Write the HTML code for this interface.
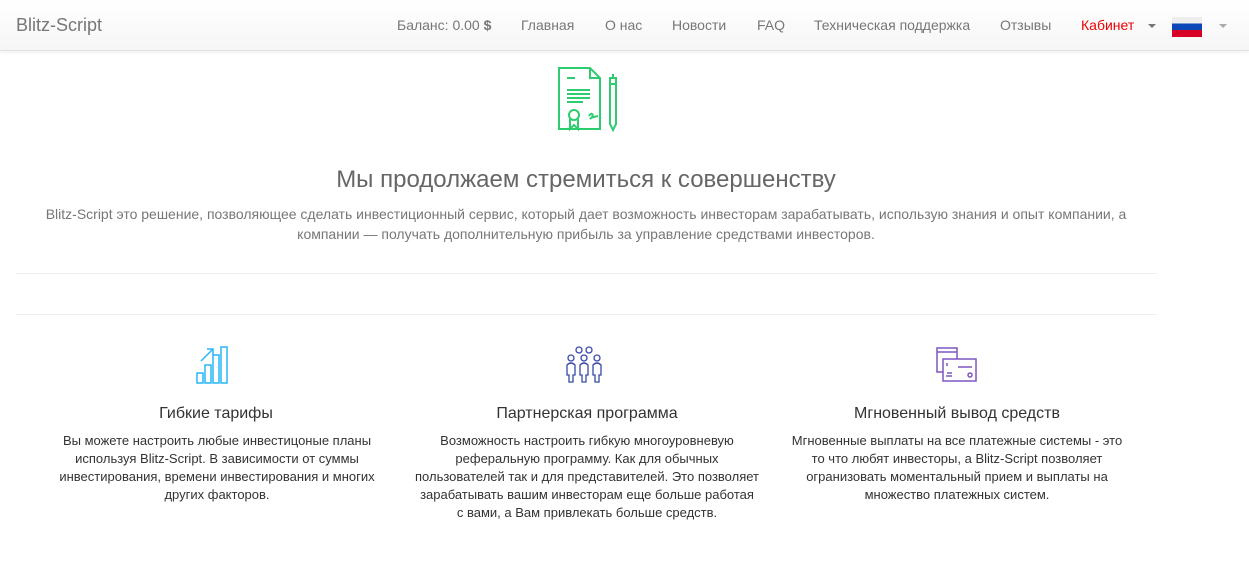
<!DOCTYPE html>
<html><head><meta charset="utf-8"><style>
*{box-sizing:border-box;margin:0;padding:0}
body{width:1249px;height:571px;overflow:hidden;background:#fff;font-family:"Liberation Sans",sans-serif;color:#333;position:relative}
.nav{position:absolute;left:0;top:0;width:1249px;height:51px;background:linear-gradient(#fff,#f6f6f6);border-bottom:1px solid #e2e2e2;box-shadow:0 1px 4px rgba(0,0,0,.08)}
.brand{position:absolute;left:16px;top:15px;font-size:18px;color:#777}
.nav span{position:absolute;top:17px;font-size:14px;color:#777}
.t{position:absolute;left:0;width:1172px;text-align:center}
.ft{position:absolute;text-align:center;font-size:13px;line-height:18px;color:#333}
.fh{position:absolute;text-align:center;font-size:16px;color:#333}
hr{position:absolute;left:16px;width:1141px;border:0;border-top:1px solid #eee}
</style></head><body>
<div class="nav">
<div class="brand">Blitz-Script</div>
<span style="left:397px">Баланс: 0.00 <b>$</b></span>
<span style="left:521px">Главная</span>
<span style="left:605px">О нас</span>
<span style="left:672px">Новости</span>
<span style="left:757px">FAQ</span>
<span style="left:814px">Техническая поддержка</span>
<span style="left:1000px">Отзывы</span>
<span style="left:1081px;color:#e00">Кабинет</span>
<div style="position:absolute;left:1148px;top:24px;border:4px solid transparent;border-top:4px solid #777"></div>
<div style="position:absolute;left:1172px;top:17px;width:30px;height:20px;background:linear-gradient(#eee 0 33%,#0c47b7 33% 66%,#d80027 66%)"></div>
<div style="position:absolute;left:1219px;top:24px;border:4px solid transparent;border-top:4px solid #aaa"></div>
</div>
<svg style="position:absolute;left:556px;top:66px" width="66" height="66" viewBox="0 0 66 66" fill="none" stroke="#2ecc71" stroke-width="2">
<path d="M3 2h31l10 10v51H3z M34 2v10h10"/>
<path d="M11 12h8M11 24h23M11 28h23M11 32h23M11 36h16"/>
<circle cx="18" cy="49" r="5"/><path d="M14 53v10l4-4 4 4v-10"/>
<path d="M33 50c2-4 5-2 3 1s-4 1 6-1"/>
<path d="M54 12v46l3 6 3-6V12z M54 18h6M57 8v4"/>
</svg>
<div class="t" style="top:166px;font-size:24px;color:#666">Мы продолжаем стремиться к совершенству</div>
<div class="t" style="top:204px;font-size:14px;line-height:20px;color:#777">Blitz-Script это решение, позволяющее сделать инвестиционный сервис, который дает возможность инвесторам зарабатывать, использую знания и опыт компании, а<br>компании — получать дополнительную прибыль за управление средствами инвесторов.</div>
<hr style="top:273px"><hr style="top:314px">
<svg style="position:absolute;left:195px;top:345px" width="44" height="40" fill="none" stroke="#29b6f6" stroke-width="1.5">
<path d="M2 28h6v10H2zM10 20h6v18h-6zM18 10h6v28h-6zM26 2h6v36h-6z M6 16l12-12M12 4h6v6"/>
</svg>
<svg style="position:absolute;left:565px;top:345px" width="44" height="40" fill="none" stroke="#3949ab" stroke-width="1.3">
<circle cx="14" cy="5" r="3"/><circle cx="24" cy="5" r="3"/>
<circle cx="6" cy="13" r="3"/><circle cx="19" cy="13" r="3"/><circle cx="32" cy="13" r="3"/>
<path d="M2 30v-10q4-4 8 0v10h-2v7h-4v-7zM15 30v-10q4-4 8 0v10h-2v7h-4v-7zM28 30v-10q4-4 8 0v10h-2v7h-4v-7z"/>
</svg>
<svg style="position:absolute;left:936px;top:346px" width="44" height="40" fill="none" stroke="#7e57c2" stroke-width="1.5">
<path d="M1 2h20v24H1z M1 6h20"/><rect x="7" y="13" width="33" height="22" fill="#fff"/>
<path d="M11 17v3M11 27h5M10 30h6M22 21h14"/><circle cx="34" cy="29" r="2"/>
</svg>
<div class="fh" style="left:16px;width:400px;top:405px">Гибкие тарифы</div>
<div class="fh" style="left:387px;width:400px;top:405px">Партнерская программа</div>
<div class="fh" style="left:757px;width:400px;top:405px">Мгновенный вывод средств</div>
<div class="ft" style="left:46px;width:342px;top:432px">Вы можете настроить любые инвестицоные планы используя Blitz-Script. В зависимости от суммы инвестирования, времени инвестирования и многих других факторов.</div>
<div class="ft" style="left:412px;width:350px;top:432px">Возможность настроить гибкую многоуровневую реферальную программу. Как для обычных<br>пользователей так и для представителей. Это позволяет зарабатывать вашим инвесторам еще больше работая<br>с вами, а Вам привлекать больше средств.</div>
<div class="ft" style="left:786px;width:342px;top:432px">Мгновенные выплаты на все платежные системы - это то что любят инвесторы, а Blitz-Script позволяет огранизовать моментальный прием и выплаты на множество платежных систем.</div>
</body></html>
